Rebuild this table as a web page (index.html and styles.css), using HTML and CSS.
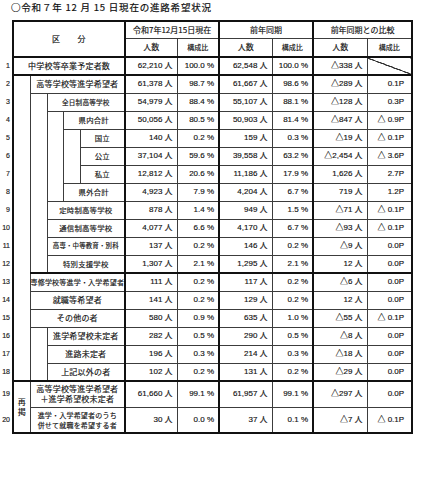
FILE: index.html
```html
<!DOCTYPE html>
<html lang="ja">
<head>
<meta charset="utf-8">
<title>進路希望状況</title>
<link rel="stylesheet" href="styles.css">
</head>
<body>
<div class="title">○令和７年 12 月 15 日現在の進路希望状況</div>
<table class="t">
<colgroup>
<col class="w-no"><col class="w-a"><col class="w-b"><col class="w-c"><col class="w-d"><col class="w-e">
<col class="w-n1"><col class="w-p1"><col class="w-n2"><col class="w-p2"><col class="w-n3"><col class="w-p3">
</colgroup>
<tr class="h1">
<td class="no" rowspan="2"></td>
<td class="kubun edge-l" colspan="5" rowspan="2">区　　分</td>
<td class="hd g" colspan="2">令和7年12月15日現在</td>
<td class="hd g" colspan="2">前年同期</td>
<td class="hd g edge-r" colspan="2">前年同期との比較</td>
</tr>
<tr class="h2">
<td class="sub g">人数</td><td class="sub s">構成比</td>
<td class="sub g">人数</td><td class="sub s">構成比</td>
<td class="sub g">人数</td><td class="sub s edge-r">構成比</td>
</tr>
<tr class="r thick-b">
<td class="no">1</td>
<td class="lb edge-l" colspan="5">中学校等卒業予定者数</td>
<td class="n g">62,210 人</td><td class="p">100.0 %</td><td class="n g">62,548 人</td><td class="p">100.0 %</td><td class="n g">△338 人</td><td class="p edge-r diag"></td>
</tr>
<tr class="r">
<td class="no">2</td>
<td class="blank edge-l" rowspan="17"></td>
<td class="lb" colspan="4">高等学校等進学希望者</td>
<td class="n g">61,378 人</td><td class="p">98.7 %</td><td class="n g">61,667 人</td><td class="p">98.6 %</td><td class="n g">△289 人</td><td class="p edge-r">0.1P</td>
</tr>
<tr class="r">
<td class="no">3</td>
<td class="blank" rowspan="10"></td>
<td class="lb sm" colspan="3">全日制高等学校</td>
<td class="n g">54,979 人</td><td class="p">88.4 %</td><td class="n g">55,107 人</td><td class="p">88.1 %</td><td class="n g">△128 人</td><td class="p edge-r">0.3P</td>
</tr>
<tr class="r">
<td class="no">4</td>
<td class="blank" rowspan="5"></td>
<td class="lb md" colspan="2">県内合計</td>
<td class="n g">50,056 人</td><td class="p">80.5 %</td><td class="n g">50,903 人</td><td class="p">81.4 %</td><td class="n g">△847 人</td><td class="p edge-r">△ 0.9P</td>
</tr>
<tr class="r">
<td class="no">5</td>
<td class="blank" rowspan="3"></td>
<td class="lb md">国立</td>
<td class="n g">140 人</td><td class="p">0.2 %</td><td class="n g">159 人</td><td class="p">0.3 %</td><td class="n g">△19 人</td><td class="p edge-r">△ 0.1P</td>
</tr>
<tr class="r">
<td class="no">6</td>
<td class="lb md">公立</td>
<td class="n g">37,104 人</td><td class="p">59.6 %</td><td class="n g">39,558 人</td><td class="p">63.2 %</td><td class="n g">△2,454 人</td><td class="p edge-r">△ 3.6P</td>
</tr>
<tr class="r">
<td class="no">7</td>
<td class="lb md">私立</td>
<td class="n g">12,812 人</td><td class="p">20.6 %</td><td class="n g">11,186 人</td><td class="p">17.9 %</td><td class="n g">1,626 人</td><td class="p edge-r">2.7P</td>
</tr>
<tr class="r">
<td class="no">8</td>
<td class="lb md" colspan="2">県外合計</td>
<td class="n g">4,923 人</td><td class="p">7.9 %</td><td class="n g">4,204 人</td><td class="p">6.7 %</td><td class="n g">719 人</td><td class="p edge-r">1.2P</td>
</tr>
<tr class="r">
<td class="no">9</td>
<td class="lb md" colspan="3">定時制高等学校</td>
<td class="n g">878 人</td><td class="p">1.4 %</td><td class="n g">949 人</td><td class="p">1.5 %</td><td class="n g">△71 人</td><td class="p edge-r">△ 0.1P</td>
</tr>
<tr class="r">
<td class="no">10</td>
<td class="lb md" colspan="3">通信制高等学校</td>
<td class="n g">4,077 人</td><td class="p">6.6 %</td><td class="n g">4,170 人</td><td class="p">6.7 %</td><td class="n g">△93 人</td><td class="p edge-r">△ 0.1P</td>
</tr>
<tr class="r">
<td class="no">11</td>
<td class="lb xs" colspan="3">高専・中等教育・別科</td>
<td class="n g">137 人</td><td class="p">0.2 %</td><td class="n g">146 人</td><td class="p">0.2 %</td><td class="n g">△9 人</td><td class="p edge-r">0.0P</td>
</tr>
<tr class="r">
<td class="no">12</td>
<td class="lb md" colspan="3">特別支援学校</td>
<td class="n g">1,307 人</td><td class="p">2.1 %</td><td class="n g">1,295 人</td><td class="p">2.1 %</td><td class="n g">12 人</td><td class="p edge-r">0.0P</td>
</tr>
<tr class="r thick-t">
<td class="no">13</td>
<td class="lb sm2" colspan="4">専修学校等進学・入学希望者</td>
<td class="n g">111 人</td><td class="p">0.2 %</td><td class="n g">117 人</td><td class="p">0.2 %</td><td class="n g">△6 人</td><td class="p edge-r">0.0P</td>
</tr>
<tr class="r">
<td class="no">14</td>
<td class="lb" colspan="4">就職等希望者</td>
<td class="n g">141 人</td><td class="p">0.2 %</td><td class="n g">129 人</td><td class="p">0.2 %</td><td class="n g">12 人</td><td class="p edge-r">0.0P</td>
</tr>
<tr class="r">
<td class="no">15</td>
<td class="lb" colspan="4">その他の者</td>
<td class="n g">580 人</td><td class="p">0.9 %</td><td class="n g">635 人</td><td class="p">1.0 %</td><td class="n g">△55 人</td><td class="p edge-r">△ 0.1P</td>
</tr>
<tr class="r">
<td class="no">16</td>
<td class="blank" rowspan="3"></td>
<td class="lb" colspan="3">進学希望校未定者</td>
<td class="n g">282 人</td><td class="p">0.5 %</td><td class="n g">290 人</td><td class="p">0.5 %</td><td class="n g">△8 人</td><td class="p edge-r">0.0P</td>
</tr>
<tr class="r">
<td class="no">17</td>
<td class="lb" colspan="3">進路未定者</td>
<td class="n g">196 人</td><td class="p">0.3 %</td><td class="n g">214 人</td><td class="p">0.3 %</td><td class="n g">△18 人</td><td class="p edge-r">0.0P</td>
</tr>
<tr class="r">
<td class="no">18</td>
<td class="lb" colspan="3">上記以外の者</td>
<td class="n g">102 人</td><td class="p">0.2 %</td><td class="n g">131 人</td><td class="p">0.2 %</td><td class="n g">△29 人</td><td class="p edge-r">0.0P</td>
</tr>
<tr class="r2 thick-t">
<td class="no">19</td>
<td class="saikei edge-l edge-b" rowspan="2">再<br>掲</td>
<td class="lb two" colspan="4">高等学校等進学希望者<br>＋進学希望校未定者</td>
<td class="n g">61,660 人</td><td class="p">99.1 %</td><td class="n g">61,957 人</td><td class="p">99.1 %</td><td class="n g">△297 人</td><td class="p edge-r">0.0P</td>
</tr>
<tr class="r2 last">
<td class="no">20</td>
<td class="lb two sm2" colspan="4">進学・入学希望者のうち<br>併せて就職を希望する者</td>
<td class="n g">30 人</td><td class="p">0.0 %</td><td class="n g">37 人</td><td class="p">0.1 %</td><td class="n g">△7 人</td><td class="p edge-r">△ 0.1P</td>
</tr>
</table>
</body>
</html>
```
FILE: styles.css
```css
body {
  margin: 0;
  background: #fff;
  color: #111;
  font-family: "Noto Sans CJK JP", sans-serif;
}

.title {
  height: 20px;
  padding-left: 11px;
  font-size: 9.5px;
  letter-spacing: 0.8px;
  line-height: 14px;
  white-space: nowrap;
  -webkit-text-stroke: 0.2px #111;
}

.t {
  border-collapse: collapse;
  table-layout: fixed;
  width: 412px;
}

.w-no { width: 13px; }
.w-a { width: 17px; }
.w-b { width: 17px; }
.w-c { width: 16px; }
.w-d { width: 17px; }
.w-e { width: 45px; }
.w-n1 { width: 52px; }
.w-p1 { width: 42px; }
.w-n2 { width: 53px; }
.w-p2 { width: 41px; }
.w-n3 { width: 54px; }
.w-p3 { width: 45px; }

.t td {
  border: 1px solid #3c3c3c;
  padding: 0;
  text-align: center;
  vertical-align: middle;
  font-size: 8px;
  line-height: 10px;
  white-space: nowrap;
  overflow: hidden;
  -webkit-text-stroke: 0.15px #111;
}

.t td.no {
  border: none;
  text-align: right;
  padding-right: 2px;
  font-family: "Liberation Sans", sans-serif;
  font-size: 7px;
  color: #222;
}

.h1 { height: 17px; }
.h2 { height: 19px; }
.r { height: 18px; }
.r2 { height: 26px; }

.h1 td:not(.no) { border-top: 2px solid #111; }
.h2 td, .t td.kubun { border-bottom: 2px solid #111; }

.kubun {
  font-size: 8.5px;
  letter-spacing: 0.5px;
}

.hd { font-size: 8px; }
.sub { font-size: 7.5px; }
.sub.s { font-size: 7px; }

.t td.g { border-left: 2px solid #111; }
.t td.edge-r { border-right: 2px solid #111; }
.t td.edge-l { border-left: 2px solid #111; }

.thick-b td:not(.no) { border-bottom: 2px solid #111; }
.thick-t td:not(.no) { border-top: 2px solid #111; }
.last td:not(.no), .t td.edge-b { border-bottom: 2px solid #111; }

.lb {
  font-size: 8px;
  letter-spacing: 0.2px;
}
.lb.sm { font-size: 6.6px; }
.lb.md { font-size: 7.4px; }
.lb.xs { font-size: 6.4px; }
.lb.sm2 { font-size: 7px; }
.lb.two { line-height: 10px; }

.n, .p {
  font-family: "Liberation Sans", "Noto Sans CJK JP", sans-serif;
  font-size: 8.5px;
  text-align: right !important;
}
.n { padding-right: 4px !important; }
.p { padding-right: 4px !important; }
.t td.edge-r.p { padding-right: 7px !important; }

.diag {
  background: linear-gradient(to top right, transparent calc(50% - 0.6px), #333 calc(50% - 0.6px), #333 calc(50% + 0.6px), transparent calc(50% + 0.6px));
}

.saikei {
  font-size: 7px;
  line-height: 9px;
}
```
